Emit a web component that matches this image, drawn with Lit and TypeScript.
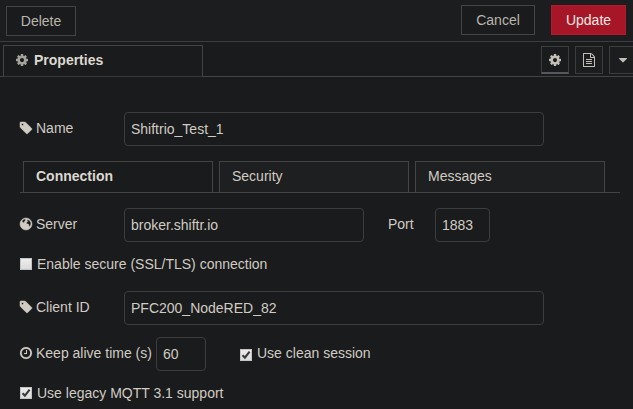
import { LitElement, html, css, svg } from "lit";
import { customElement, property } from "lit/decorators.js";

const ICONS: Record<string, string> = {
  cog: "M1152 896q0-106-75-181t-181-75-181 75-75 181 75 181 181 75 181-75 75-181zm512-109v222q0 12-8 23t-20 13l-185 28q-19 54-39 91 35 50 107 138 10 12 10 25t-9 23q-27 37-99 108t-94 71q-12 0-26-9l-138-108q-44 23-91 38-16 136-29 186-7 28-36 28h-222q-14 0-24.5-8.500t-11.500-21.500l-28-184q-49-16-90-37l-141 107q-10 9-25 9-14 0-25-11-126-114-165-168-7-10-7-23 0-12 8-23 15-21 51-66.500t54-70.500q-27-50-41-99l-183-27q-13-2-21-12.500t-8-23.500v-222q0-12 8-23t19-13l186-28q14-46 39-92-40-57-107-138-10-12-10-24 0-10 9-23 26-36 98.500-107.500t94.500-71.500q13 0 26 10l138 107q44-23 91-38 16-136 29-186 7-28 36-28h222q14 0 24.500 8.500t11.500 21.500l28 184q49 16 90 37l142-107q9-9 24-9 13 0 25 10 129 119 165 170 7 8 7 22 0 12-8 23-15 21-51 66.500t-54 70.500q26 50 41 98l183 28q13 2 21 12.500t8 23.500z",
  tag: "M576 448q0-53-37.500-90.500t-90.500-37.500-90.500 37.500-37.500 90.500 37.500 90.500 90.500 37.500 90.500-37.500 37.500-90.500zm1067 576q0 53-37 90l-491 492q-39 37-91 37-53 0-90-37l-715-716q-38-37-64.500-101t-26.500-117v-416q0-52 38-90t90-38h416q53 0 117 26.500t102 64.500l715 714q37 39 37 91z",
  clock: "M1024 544v448q0 14-9 23t-23 9h-320q-14 0-23-9t-9-23v-64q0-14 9-23t23-9h224v-352q0-14 9-23t23-9h64q14 0 23 9t9 23zm416 352q0-148-73-273t-198-198-273-73-273 73-198 198-73 273 73 273 198 198 273 73 273-73 198-198 73-273zm224 0q0 209-103 385.500t-279.500 279.500-385.500 103-385.500-103-279.500-279.500-103-385.500 103-385.500 279.500-279.500 385.500-103 385.500 103 279.500 279.500 103 385.500z",
  file: "M1596 380q28 28 48 76t20 88v1152q0 40-28 68t-68 28h-1344q-40 0-68-28t-28-68v-1600q0-40 28-68t68-28h896q40 0 88 20t76 48zm-444-244v376h376q-10-29-22-41l-313-313q-12-12-41-22zm384 1528v-1024h-416q-40 0-68-28t-28-68v-416h-768v1536h1280zm-1024-864q0-14 9-23t23-9h704q14 0 23 9t9 23v64q0 14-9 23t-23 9h-704q-14 0-23-9t-9-23v-64zm736 224q14 0 23 9t9 23v64q0 14-9 23t-23 9h-704q-14 0-23-9t-9-23v-64q0-14 9-23t23-9h704zm0 256q14 0 23 9t9 23v64q0 14-9 23t-23 9h-704q-14 0-23-9t-9-23v-64q0-14 9-23t23-9h704z",
  globe: "M896 128a768 768 0 1 0 0 1536a768 768 0 1 0 0-1536zM560 330L760 250L880 290L800 390L860 480L740 540L640 660L700 740L620 780L500 700L400 560L420 430zM1060 330L1260 380L1420 520L1520 720L1540 900L1440 1120L1330 1240L1250 1160L1260 980L1120 900L1000 880L940 740L1020 620L1130 560L1040 450z",
  caret: "M1408 704q0 26-19 45l-448 448q-19 19-45 19t-45-19l-448-448q-19-19-19-45t19-45 45-19h896q26 0 45 19t19 45z",
};

@customElement("fa-icon")
class FaIcon extends LitElement {
  @property() name = "cog";
  static styles = css`
    :host { display: block; flex: none; width: 14px; height: 14px; }
    .glyph { display: block; width: 14px; height: 14px; overflow: visible; fill: currentColor; fill-rule: evenodd;
      stroke: currentColor; stroke-width: var(--icon-weight, 0); }
  `;
  render() {
    return html`<svg class="glyph" viewBox="0 0 1792 1792">${svg`<path d=${ICONS[this.name]}></path>`}</svg>`;
  }
}

@customElement("check-box")
class CheckBox extends LitElement {
  @property({ type: Boolean }) checked = false;
  static styles = css`
    :host { display: flex; align-items: flex-start; white-space: nowrap; }
    .box { display: block; flex: none; width: 12px; height: 12px; margin-right: 5px;
      box-sizing: border-box; border: 1px solid #c4c4c4; background: linear-gradient(#ececec, #dcdcdc); }
    .mark { display: block; width: 10px; height: 10px; fill: none; stroke: #3a3a3a; stroke-width: 2.1; }
    .text { line-height: 16px; margin-top: var(--text-shift, -2px); }
  `;
  render() {
    return html`
      <span class="box">${this.checked
        ? html`<svg class="mark" viewBox="0 0 10 10"><path d="M1.5 5.2L3.9 7.6L8.6 1.6"></path></svg>`
        : ""}</span>
      <span class="text"><slot></slot></span>`;
  }
}

@customElement("app-root")
class AppRoot extends LitElement {
  static styles = css`
    :host { display: block; width: 633px; height: 409px; overflow: hidden; background: #1a1b1c;
      color: #d0cbc3; font: 14px/16px "Liberation Sans", Arial, sans-serif; }
    * { box-sizing: border-box; }
    .toolbar { display: flex; align-items: flex-start; height: 42px; padding: 5px 7px 0 6px;
      border-bottom: 1px solid #3c3d3e; background: #1c1d1e; }
    .btn { height: 30px; border: 1px solid #444; background: #1a1b1c; color: #b9b5ad;
      font: inherit; padding: 0; text-align: center; }
    .delete { width: 70px; margin-top: 1px; margin-right: auto; }
    .cancel { width: 74px; margin-right: 16px; }
    .update { width: 75px; background: #a71626; border-color: #b8182b; color: #f3e9e6; }
    .head { display: flex; height: 35px; padding: 3px 0 0 3px; border-bottom: 1px solid #444; }
    .title { display: flex; width: 200px; height: 32px; margin-bottom: -1px; padding: 6px 0 0 11px; gap: 5px;
      border: 1px solid #444; border-bottom-color: #37383a; font-weight: bold; color: #dcd8d0; margin-right: auto; }
    .title fa-icon { color: #a5a29b; margin-top: 1px; }
    .tool { display: flex; align-items: center; justify-content: center; width: 28px; height: 28px;
      margin-top: 1px; margin-right: 6px; border: 1px solid #3c3d3e; color: #c4bfb6; background: #1c1d1e; }
    .tool.on { border-bottom: 2px solid #58585a; background: #1a1b1c; }
    .tool:last-child { margin-right: -4px; }
    .form { display: flex; flex-direction: column; padding: 35px 13px 0 19px; }
    .row { display: flex; align-items: flex-start; height: 34px; }
    .label { display: flex; gap: 3px; margin-top: 8px; width: 105px; white-space: nowrap; }
    .label fa-icon { margin-top: 1px; --icon-weight: 70; }
    .label fa-icon[name="clock"] { --icon-weight: 15; }
    .field { height: 34px; border: 1px solid #3c3d3f; border-radius: 4px; background: #1a1b1c;
      color: #d0cbc3; font: inherit; padding: 0 6px; margin: 0; outline: 0; }
    .wide { width: 420px; }
    .server { width: 240px; }
    .port { width: 55px; }
    .alive { width: 50px; }
    .port-label { margin: 8px 0 0 24px; width: 47px; }
    .alive-label { width: 137px; }
    .tabs { display: flex; gap: 6px; height: 32px; margin: 15px 0 15px 1px; padding-left: 3px; border-bottom: 1px solid #444; }
    .tab { width: 190px; height: 31px; padding: 6px 12px 0; border: 1px solid #444; border-bottom: 0; background: #1e1f20; }
    .tab.on { background: #1a1b1c; font-weight: bold; color: #dcd8d0; }
    .check { height: 12px; margin-left: 1px; }
    .secure { margin-top: 16px; margin-bottom: 21px; }
    .alive-row { margin-top: 12px; }
    .legacy { margin-top: 16px; }
    .clean { margin: 12px 0 0 34px; --text-shift: -4px; }
  `;
  render() {
    return html`
      <div class="toolbar">
        <button class="btn delete">Delete</button>
        <button class="btn cancel">Cancel</button>
        <button class="btn update">Update</button>
      </div>
      <div class="head">
        <div class="title"><fa-icon name="cog"></fa-icon>Properties</div>
        <div class="tool on"><fa-icon name="cog"></fa-icon></div>
        <div class="tool"><fa-icon name="file"></fa-icon></div>
        <div class="tool"><fa-icon name="caret"></fa-icon></div>
      </div>
      <div class="form">
        <div class="row">
          <label class="label"><fa-icon name="tag"></fa-icon>Name</label>
          <input class="field wide" .value=${"Shiftrio_Test_1"} />
        </div>
        <div class="tabs">
          <div class="tab on">Connection</div>
          <div class="tab">Security</div>
          <div class="tab">Messages</div>
        </div>
        <div class="row">
          <label class="label"><fa-icon name="globe"></fa-icon>Server</label>
          <input class="field server" .value=${"broker.shiftr.io"} />
          <label class="port-label">Port</label>
          <input class="field port" .value=${"1883"} />
        </div>
        <check-box class="check secure">Enable secure (SSL/TLS) connection</check-box>
        <div class="row">
          <label class="label"><fa-icon name="tag"></fa-icon>Client ID</label>
          <input class="field wide" .value=${"PFC200_NodeRED_82"} />
        </div>
        <div class="row alive-row">
          <label class="label alive-label"><fa-icon name="clock"></fa-icon>Keep alive time (s)</label>
          <input class="field alive" .value=${"60"} />
          <check-box class="clean" checked>Use clean session</check-box>
        </div>
        <check-box class="check legacy" checked>Use legacy MQTT 3.1 support</check-box>
      </div>`;
  }
}
